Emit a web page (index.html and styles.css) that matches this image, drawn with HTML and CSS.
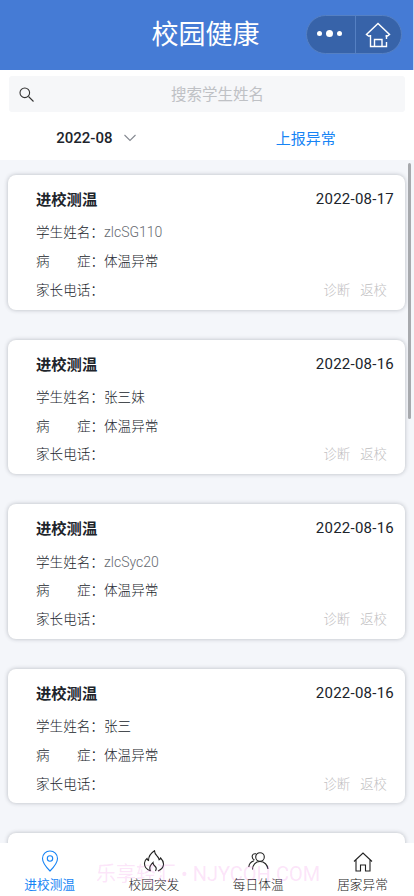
FILE: index.html
```html
<!DOCTYPE html>
<html lang="zh-CN">
<head>
<meta charset="utf-8">
<meta name="viewport" content="width=device-width, initial-scale=1">
<title>校园健康</title>
<link rel="stylesheet" href="styles.css">
</head>
<body>
<div class="app">
  <header class="header">
    <h1>校园健康</h1>
    <div class="capsule">
      <span class="more"><i></i><i class="big"></i><i></i></span>
      <span class="home"><svg width="26" height="26" viewBox="0 0 26 26"><path d="M5.500 14H3.500l-2-1.500L13 1.500l11.500 11-2 1.500h-2M5.500 13v11.500h16V20M21.500 17v-4M9.500 24.500v-7h7.500v7"/></svg></span>
    </div>
  </header>
  <div class="search">
    <div class="search-box">
      <svg width="16" height="16" viewBox="0 0 16 16"><circle cx="5.800" cy="5.800" r="4.800"/><path d="m9.500 9.500 5 5"/></svg>
      <span>搜索学生姓名</span>
    </div>
  </div>
  <div class="filters">
    <div class="month"><span>2022-08</span><svg width="12" height="8" viewBox="0 0 12 8"><path d="m.5 1 5.500 5.500L11.500 1"/></svg></div>
    <a class="report">上报异常</a>
  </div>
  <main class="list">
    <article class="card">
      <div class="top"><h2>进校测温</h2><time>2022-08-17</time></div>
      <div class="row"><span class="label">学生姓名：</span><span class="latin">zlcSG110</span></div>
      <div class="row"><span class="label"><b>病</b><b>症：</b></span><span>体温异常</span></div>
      <div class="row"><span class="label">家长电话：</span><span class="actions"><a>诊断</a><a>返校</a></span></div>
    </article>
    <article class="card">
      <div class="top"><h2>进校测温</h2><time>2022-08-16</time></div>
      <div class="row"><span class="label">学生姓名：</span><span>张三妹</span></div>
      <div class="row"><span class="label"><b>病</b><b>症：</b></span><span>体温异常</span></div>
      <div class="row"><span class="label">家长电话：</span><span class="actions"><a>诊断</a><a>返校</a></span></div>
    </article>
    <article class="card">
      <div class="top"><h2>进校测温</h2><time>2022-08-16</time></div>
      <div class="row"><span class="label">学生姓名：</span><span class="latin">zlcSyc20</span></div>
      <div class="row"><span class="label"><b>病</b><b>症：</b></span><span>体温异常</span></div>
      <div class="row"><span class="label">家长电话：</span><span class="actions"><a>诊断</a><a>返校</a></span></div>
    </article>
    <article class="card">
      <div class="top"><h2>进校测温</h2><time>2022-08-16</time></div>
      <div class="row"><span class="label">学生姓名：</span><span>张三</span></div>
      <div class="row"><span class="label"><b>病</b><b>症：</b></span><span>体温异常</span></div>
      <div class="row"><span class="label">家长电话：</span><span class="actions"><a>诊断</a><a>返校</a></span></div>
    </article>
    <article class="card"></article>
    <div class="scrollbar"></div>
  </main>
  <nav class="tabs">
    <a class="tab active"><svg width="22" height="22" viewBox="0 0 22 22"><path d="M11 21C7 17 3.500 12.500 3.500 8.500a7.500 7.500 0 0 1 15 0C18.500 12.500 15 17 11 21z"/><circle cx="11" cy="8.500" r="2.700"/></svg><span>进校测温</span></a>
    <a class="tab"><svg width="22" height="22" viewBox="0 0 22 22"><path d="M7.500 21C3.500 19.500 1.300 16.500 1.500 13c.2-2 1.200-3.500 2.500-4.500.3 1.200.8 1.700 1.500 2C5.500 6 8 3 11.500.8c0 3 1.500 4.200 3 5.700 1 1 1.500 2 1.600 3.300.9-.4 1.300-1 1.500-1.800 4 4 4.500 10-2.600 13M7.500 21c-1.800-4 .2-6 2.500-8.500 0 2 .8 2.800 2 3.700 1.500 1.200 1.500 3 .5 4.800"/></svg><span>校园突发</span></a>
    <a class="tab"><svg width="22" height="22" viewBox="0 0 22 22"><circle cx="13" cy="7" r="4.300"/><path d="M5.500 19.500c0-4.500 3-8 7.500-8s7.500 3.500 8 7.500M9 3.800C4.500 2.800 4 8.500 7.500 10M7 10.800C3.500 12 2 14 1.800 17"/></svg><span>每日体温</span></a>
    <a class="tab"><svg width="22" height="22" viewBox="0 0 22 22"><path d="m2 11.500 9-8.500 9 8.500M4 10v11h4.500v-6h5v6H18V10"/></svg><span>居家异常</span></a>
    <div class="watermark">乐享轻汇 • NJYCOH.COM</div>
  </nav>
</div>
</body>
</html>
```
FILE: styles.css
```css
* { box-sizing: border-box; }
body { margin: 0; font-family: Roboto, "Noto Sans CJK SC", sans-serif; color: #20242b; }
h1, h2 { margin: 0; }
svg { fill: none; stroke: currentColor; stroke-width: 1.1; flex: none; }
.app { width: 414px; height: 896px; display: flex; flex-direction: column; overflow: hidden; background: #fff; }
.header { height: 70px; flex: none; background: #457bd5; border-right: 1px solid #c3d4f2; position: relative; display: flex; align-items: center; justify-content: center; color: #fff; }
.header h1 { font-size: 27px; font-weight: 400; line-height: 40px; padding: 0 2px 1px 0; }
.capsule { position: absolute; right: 11px; top: 15px; width: 96px; height: 39px; border-radius: 20px; background: #3763a9; border: 1px solid #5580c3; display: flex; }
.capsule span { flex: 1; display: flex; align-items: center; justify-content: center; }
.capsule .home svg { stroke-width: 1.4; }
.more { gap: 4px; border-right: 1px solid #5580c3; padding: 0 2px 2px 0; }
.more i { width: 5px; height: 5px; border-radius: 50%; background: #fff; }
.more .big { width: 7px; height: 7px; }
.search { padding: 6px 9px; height: 48px; flex: none; }
.search-box { height: 36px; background: #f6f7f9; border-radius: 3px; display: flex; align-items: center; justify-content: center; color: #bfc1c5; font-size: 15.5px; position: relative; padding: 0 0 2px 21px; }
.search-box svg { position: absolute; left: 10px; top: 11px; color: #333; }
.filters { height: 42px; flex: none; display: flex; align-items: center; padding-bottom: 2px; }
.month { width: 193px; display: flex; justify-content: center; align-items: center; gap: 12px; font-size: 15px; font-weight: 500; padding-left: 2px; }
.month svg { color: #858991; }
.report { width: 226px; text-align: center; color: #1684f5; font-size: 15px; padding-bottom: 2px; padding-left: 7px; }
.list { flex: 1; min-height: 0; overflow: hidden; background: #f4f6fa; position: relative; padding: 15px 9px 0 8px; display: flex; flex-direction: column; gap: 30px; }
.card { height: 134.600px; flex: none; background: #fff; border-radius: 8px; box-shadow: 0 0 4px rgba(40, 45, 60, .3); padding: 10px 11px 0 28px; }
.top { display: flex; justify-content: space-between; align-items: center; height: 26px; margin-bottom: 6px; }
.top h2 { font-size: 15.300px; font-weight: 700; }
.top time { font-size: 15px; letter-spacing: .25px; padding-top: 2px; }
.row { height: 28.700px; display: flex; align-items: center; font-size: 13.600px; font-weight: 300; }
.label { width: 68px; display: flex; justify-content: space-between; white-space: nowrap; }
.label b { font-weight: 300; }
.label b + b { width: 27px; }
.latin { color: #666a70; font-size: 14px; padding-top: 2px; }
.actions { margin-left: auto; margin-right: 7px; display: flex; gap: 10px; color: #bfc0c2; font-size: 13.400px; }
.scrollbar { position: absolute; right: 3px; top: 3px; width: 3px; height: 256px; background: #a7a9ad; border-radius: 2px; }
.tabs { height: 53px; flex: none; background: #fff; display: flex; position: relative; }
.tab { width: 104.300px; flex: none; display: flex; flex-direction: column; align-items: center; padding-top: 7px; padding-right: 5px; font-size: 12.700px; line-height: 18px; font-weight: 300; color: #222; }
.tab span { margin-top: 4px; }
.tab.active { color: #1684f5; font-weight: 400; }
.watermark { position: absolute; left: 96px; top: 17px; font-size: 20px; line-height: 28px; color: rgba(240, 120, 225, .2); white-space: nowrap; }
```
